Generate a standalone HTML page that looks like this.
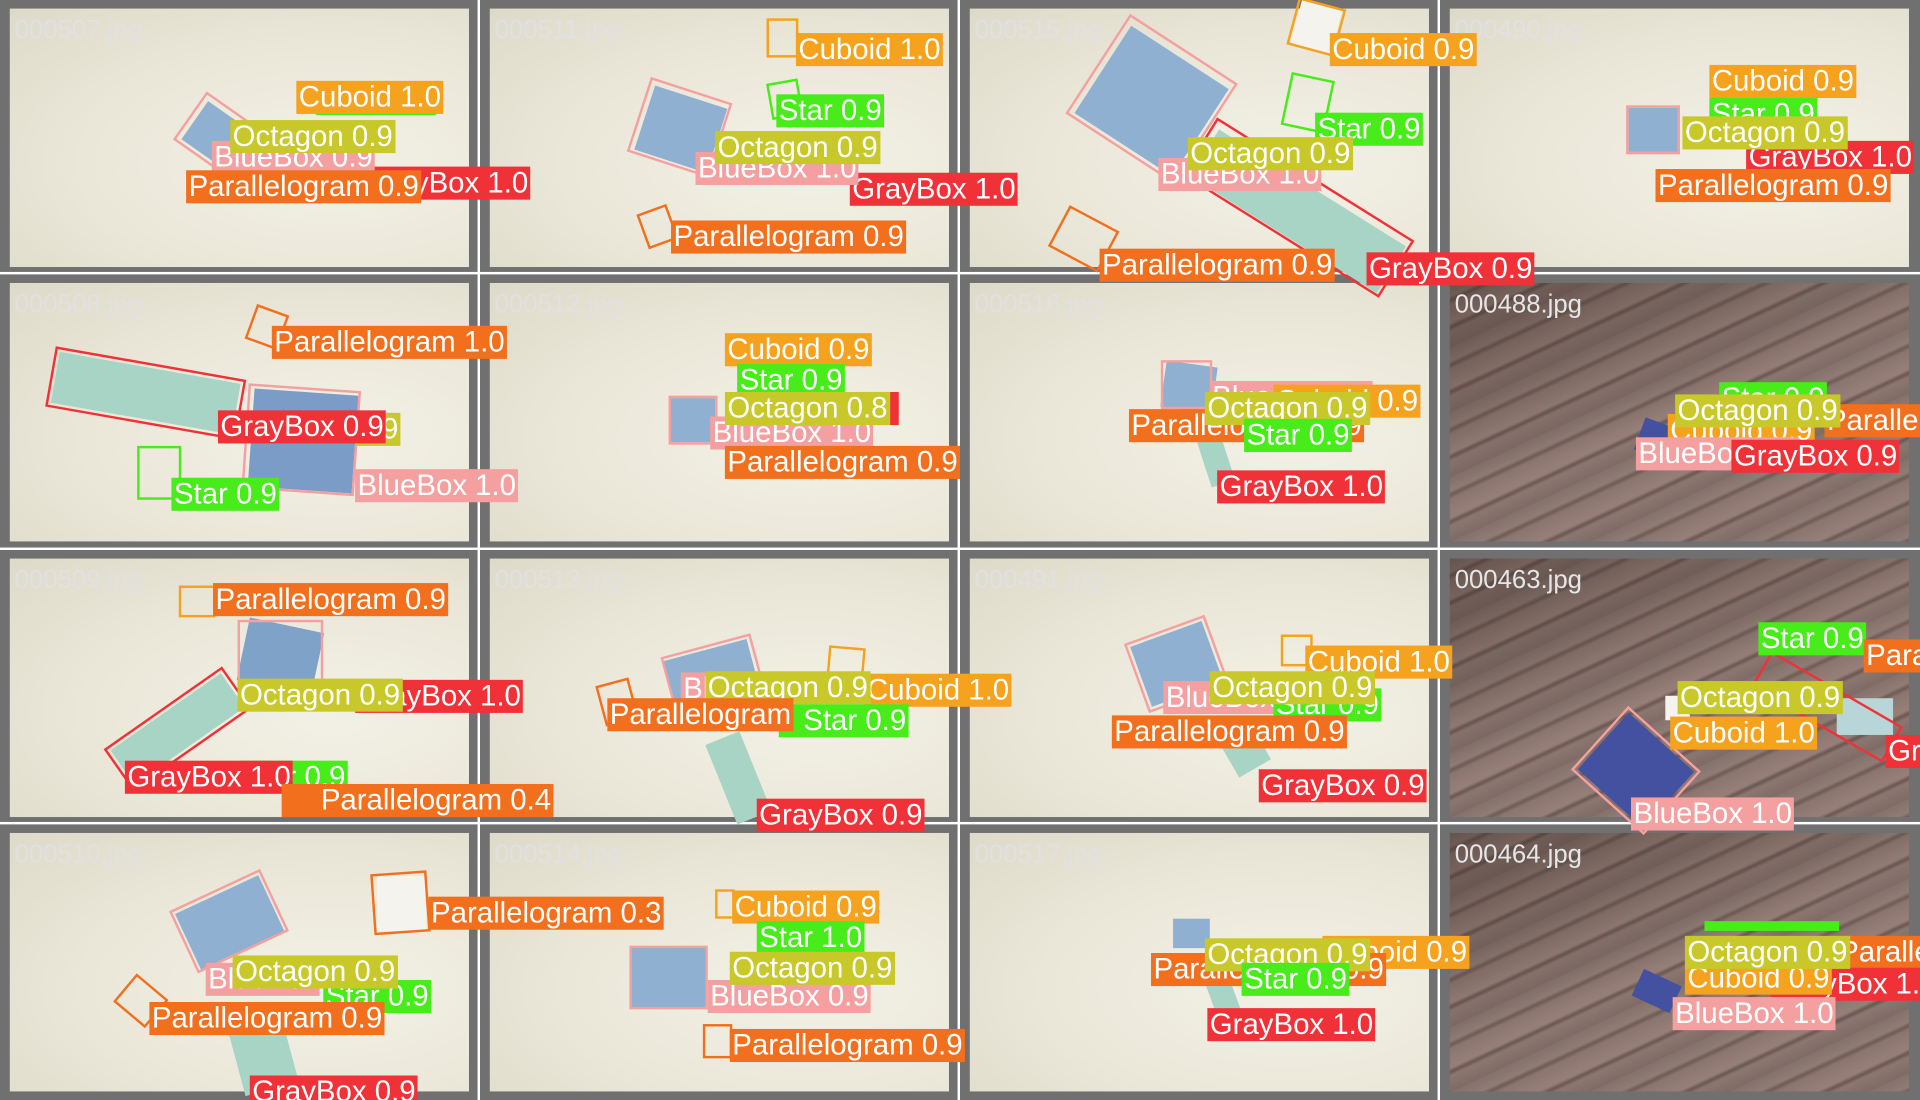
<!DOCTYPE html>
<html><head><meta charset="utf-8"><style>
html,body{margin:0;padding:0;width:1920px;height:1100px;overflow:hidden;background:#fff}
#c{position:absolute;left:0;top:0;width:1568px;height:898px;transform-origin:0 0;transform:scale(1.22449,1.22494);background:#707070;overflow:hidden;font-family:"Liberation Sans",sans-serif}
.vl{position:absolute;top:0;width:2px;height:898px;background:#fff}
.hl{position:absolute;left:0;height:2px;width:1568px;background:#fff}
.im{position:absolute;width:375px;height:211px;overflow:visible}
.m{background:radial-gradient(ellipse at 70% 60%,#f3f1e6 0%,#ebe8da 50%,#dedac9 100%)}
.w{background:linear-gradient(160deg,rgba(40,25,20,.35),rgba(0,0,0,0) 50%),repeating-linear-gradient(155deg,#85716b 0px,#8f7c75 10px,#6e5b55 13px,#8a766f 16px,#977f78 30px,#6a5752 33px,#8b7770 36px,#7f6b65 48px)}
.fn{position:absolute;left:4px;top:6px;font-size:21px;color:rgba(225,225,230,.8);line-height:24px}
.w .fn{color:#e6e6e6}
.l{position:absolute;height:27px;line-height:27px;font-size:24px;color:#fff;padding:0 2px;white-space:nowrap}
.cu{background:#f5a21f}.st{background:#47ec1a}.oc{background:#c8c82b}.bb{background:#f5a0a0}.pa{background:#f2701d}.gb{background:#f03238}
.o{position:absolute;border:2px solid;box-sizing:border-box}
.blue{position:absolute;background:#8fb0d0}
.dblue{position:absolute;background:#4450a0}
.gray{position:absolute;background:#a8d4c6}
.cube{position:absolute;background:#f4f3ee}
</style></head><body><div id="c">

<div class="im m" style="left:8px;top:6.5px"><div class="fn">000507.jpg</div></div>
<div class="im m" style="left:400px;top:6.5px"><div class="fn">000511.jpg</div></div>
<div class="im m" style="left:792px;top:6.5px"><div class="fn">000515.jpg</div></div>
<div class="im m" style="left:1184px;top:6.5px"><div class="fn">000490.jpg</div></div>
<div class="im m" style="left:8px;top:231px"><div class="fn">000508.jpg</div></div>
<div class="im m" style="left:400px;top:231px"><div class="fn">000512.jpg</div></div>
<div class="im m" style="left:792px;top:231px"><div class="fn">000516.jpg</div></div>
<div class="im w" style="left:1184px;top:231px"><div class="fn">000488.jpg</div></div>
<div class="im m" style="left:8px;top:455.5px"><div class="fn">000509.jpg</div></div>
<div class="im m" style="left:400px;top:455.5px"><div class="fn">000513.jpg</div></div>
<div class="im m" style="left:792px;top:455.5px"><div class="fn">000491.jpg</div></div>
<div class="im w" style="left:1184px;top:455.5px"><div class="fn">000463.jpg</div></div>
<div class="im m" style="left:8px;top:680px"><div class="fn">000510.jpg</div></div>
<div class="im m" style="left:400px;top:680px"><div class="fn">000514.jpg</div></div>
<div class="im m" style="left:792px;top:680px"><div class="fn">000517.jpg</div></div>
<div class="im w" style="left:1184px;top:680px"><div class="fn">000464.jpg</div></div>

<div class="vl" style="left:390px"></div><div class="vl" style="left:782px"></div><div class="vl" style="left:1174px"></div>
<div class="hl" style="top:222px"></div><div class="hl" style="top:446.5px"></div><div class="hl" style="top:671px"></div>

<div class="blue" style="left:155px;top:92px;width:45px;height:38px;transform:rotate(35deg)"></div>
<div class="o" style="left:150px;top:86px;width:55px;height:48px;transform:rotate(35deg);border-color:#f5a0a0"></div>
<div class="blue" style="left:525px;top:78px;width:62px;height:55px;transform:rotate(18deg)"></div>
<div class="o" style="left:520px;top:72px;width:70px;height:64px;transform:rotate(18deg);border-color:#f5a0a0"></div>
<div class="blue" style="left:893px;top:40px;width:95px;height:85px;transform:rotate(33deg)"></div>
<div class="o" style="left:888px;top:32px;width:105px;height:97px;transform:rotate(33deg);border-color:#f5a0a0"></div>
<div class="gray" style="left:970px;top:150px;width:180px;height:45px;transform:rotate(32deg)"></div>
<div class="o" style="left:965px;top:142px;width:190px;height:55px;transform:rotate(32deg);border-color:#f03238"></div>
<div class="cube" style="left:1058px;top:4px;width:34px;height:36px;transform:rotate(15deg)"></div>
<div class="o" style="left:1055px;top:2px;width:40px;height:40px;transform:rotate(15deg);border-color:#f5a21f"></div>
<div class="o" style="left:1050px;top:62px;width:36px;height:44px;transform:rotate(12deg);border-color:#47ec1a"></div>
<div class="o" style="left:862px;top:176px;width:46px;height:38px;transform:rotate(28deg);border-color:#f2701d"></div>
<div class="blue" style="left:1330px;top:88px;width:40px;height:36px"></div>
<div class="o" style="left:1328px;top:86px;width:44px;height:40px;border-color:#f5a0a0"></div>
<div class="o" style="left:626px;top:15px;width:26px;height:32px;border-color:#f5a21f"></div>
<div class="o" style="left:628px;top:66px;width:26px;height:30px;transform:rotate(-10deg);border-color:#47ec1a"></div>
<div class="o" style="left:524px;top:170px;width:26px;height:30px;transform:rotate(-20deg);border-color:#f2701d"></div>

<div class="gray" style="left:44px;top:300px;width:150px;height:42px;transform:rotate(10deg)"></div>
<div class="o" style="left:40px;top:296px;width:158px;height:50px;transform:rotate(10deg);border-color:#f03238"></div>
<div class="blue" style="left:205px;top:320px;width:85px;height:80px;transform:rotate(4deg);background:#7a9cc6"></div>
<div class="o" style="left:200px;top:316px;width:92px;height:86px;transform:rotate(4deg);border-color:#f5a0a0"></div>
<div class="o" style="left:112px;top:364px;width:36px;height:44px;border-color:#47ec1a"></div>
<div class="o" style="left:204px;top:252px;width:28px;height:30px;transform:rotate(20deg);border-color:#f2701d"></div>
<div class="blue" style="left:548px;top:325px;width:36px;height:36px"></div>
<div class="o" style="left:546px;top:323px;width:40px;height:40px;border-color:#f5a0a0"></div>
<div class="blue" style="left:950px;top:297px;width:42px;height:38px;transform:rotate(8deg)"></div>
<div class="o" style="left:948px;top:294px;width:42px;height:40px;border-color:#f5a0a0"></div>
<div class="gray" style="left:982px;top:350px;width:20px;height:46px;transform:rotate(-18deg)"></div>
<div class="dblue" style="left:1338px;top:346px;width:36px;height:28px;transform:rotate(20deg)"></div>

<div class="blue" style="left:198px;top:510px;width:62px;height:52px;transform:rotate(12deg);background:#7fa2c8"></div>
<div class="o" style="left:194px;top:506px;width:70px;height:60px;border-color:#f5a0a0"></div>
<div class="gray" style="left:90px;top:578px;width:110px;height:34px;transform:rotate(-35deg)"></div>
<div class="o" style="left:86px;top:574px;width:118px;height:42px;transform:rotate(-35deg);border-color:#f03238"></div>
<div class="o" style="left:146px;top:478px;width:30px;height:26px;border-color:#f5a21f"></div>
<div class="blue" style="left:546px;top:530px;width:70px;height:40px;transform:rotate(-15deg)"></div>
<div class="o" style="left:544px;top:526px;width:76px;height:46px;transform:rotate(-15deg);border-color:#f5a0a0"></div>
<div class="gray" style="left:588px;top:600px;width:30px;height:70px;transform:rotate(-22deg)"></div>
<div class="o" style="left:676px;top:528px;width:30px;height:26px;transform:rotate(5deg);border-color:#f5a21f"></div>
<div class="o" style="left:490px;top:556px;width:28px;height:34px;transform:rotate(-15deg);border-color:#f2701d"></div>
<div class="blue" style="left:930px;top:516px;width:62px;height:52px;transform:rotate(-20deg)"></div>
<div class="o" style="left:926px;top:512px;width:70px;height:60px;transform:rotate(-20deg);border-color:#f5a0a0"></div>
<div class="gray" style="left:1000px;top:590px;width:30px;height:40px;transform:rotate(-30deg)"></div>
<div class="o" style="left:1046px;top:518px;width:26px;height:26px;border-color:#f5a21f"></div>
<div class="cube" style="left:1360px;top:568px;width:20px;height:20px"></div>
<div class="dblue" style="left:1300px;top:598px;width:72px;height:62px;transform:rotate(42deg)"></div>
<div class="o" style="left:1296px;top:594px;width:80px;height:70px;transform:rotate(42deg);border-color:#f5a0a0"></div>
<div class="cube" style="left:1500px;top:570px;width:46px;height:30px;background:#b8d6d8"></div>
<div class="o" style="left:1430px;top:560px;width:124px;height:34px;transform:rotate(30deg);border-color:#f03238"></div>

<div class="blue" style="left:150px;top:728px;width:75px;height:50px;transform:rotate(-25deg)"></div>
<div class="o" style="left:146px;top:724px;width:82px;height:56px;transform:rotate(-25deg);border-color:#f5a0a0"></div>
<div class="gray" style="left:192px;top:830px;width:45px;height:60px;transform:rotate(-15deg)"></div>
<div class="cube" style="left:308px;top:715px;width:40px;height:45px"></div>
<div class="o" style="left:304px;top:712px;width:46px;height:50px;transform:rotate(-4deg);border-color:#f2701d"></div>
<div class="o" style="left:98px;top:802px;width:34px;height:30px;transform:rotate(40deg);border-color:#f2701d"></div>
<div class="blue" style="left:515px;top:773px;width:62px;height:50px"></div>
<div class="o" style="left:514px;top:772px;width:64px;height:52px;border-color:#f5a0a0"></div>
<div class="o" style="left:574px;top:836px;width:24px;height:28px;border-color:#f2701d"></div>
<div class="o" style="left:584px;top:726px;width:16px;height:24px;border-color:#f5a21f"></div>
<div class="blue" style="left:958px;top:750px;width:30px;height:24px"></div>
<div class="gray" style="left:990px;top:800px;width:20px;height:34px;transform:rotate(-20deg)"></div>
<div class="dblue" style="left:1336px;top:797px;width:34px;height:24px;transform:rotate(25deg)"></div>

<div class="l gb" style="left:296px;top:136px">GrayBox 1.0</div>
<div class="l st" style="left:258px;top:86px;height:8px;width:94px;overflow:hidden"></div>
<div class="l cu" style="left:242px;top:66px">Cuboid 1.0</div>
<div class="l bb" style="left:173px;top:115px">BlueBox 0.9</div>
<div class="l oc" style="left:188px;top:98px">Octagon 0.9</div>
<div class="l pa" style="left:152px;top:139px">Parallelogram 0.9</div>
<div class="l cu" style="left:650px;top:27px">Cuboid 1.0</div>
<div class="l st" style="left:634px;top:77px">Star 0.9</div>
<div class="l gb" style="left:694px;top:141px">GrayBox 1.0</div>
<div class="l bb" style="left:568px;top:124px">BlueBox 1.0</div>
<div class="l oc" style="left:584px;top:107px">Octagon 0.9</div>
<div class="l pa" style="left:548px;top:180px">Parallelogram 0.9</div>
<div class="l cu" style="left:1086px;top:27px">Cuboid 0.9</div>
<div class="l st" style="left:1074px;top:92px">Star 0.9</div>
<div class="l bb" style="left:946px;top:129px">BlueBox 1.0</div>
<div class="l oc" style="left:970px;top:112px">Octagon 0.9</div>
<div class="l pa" style="left:898px;top:203px">Parallelogram 0.9</div>
<div class="l gb" style="left:1116px;top:206px">GrayBox 0.9</div>
<div class="l st" style="left:1396px;top:80px">Star 0.9</div>
<div class="l cu" style="left:1396px;top:53px">Cuboid 0.9</div>
<div class="l gb" style="left:1426px;top:115px">GrayBox 1.0</div>
<div class="l oc" style="left:1374px;top:95px">Octagon 0.9</div>
<div class="l pa" style="left:1352px;top:138px">Parallelogram 0.9</div>
<div class="l pa" style="left:222px;top:266px">Parallelogram 1.0</div>
<div class="l oc" style="left:290px;top:337px">0.9</div>
<div class="l gb" style="left:178px;top:335px">GrayBox 0.9</div>
<div class="l bb" style="left:290px;top:383px">BlueBox 1.0</div>
<div class="l st" style="left:140px;top:390px">Star 0.9</div>
<div class="l cu" style="left:592px;top:272px">Cuboid 0.9</div>
<div class="l st" style="left:602px;top:297px">Star 0.9</div>
<div class="l gb" style="left:700px;top:320px;width:30px"></div>
<div class="l bb" style="left:580px;top:340px">BlueBox 1.0</div>
<div class="l oc" style="left:592px;top:320px">Octagon 0.8</div>
<div class="l pa" style="left:592px;top:364px">Parallelogram 0.9</div>
<div class="l bb" style="left:988px;top:311px">BlueBox 1.0</div>
<div class="l cu" style="left:1040px;top:314px">Cuboid 0.9</div>
<div class="l pa" style="left:922px;top:334px">Parallelogram 0.9</div>
<div class="l oc" style="left:984px;top:320px">Octagon 0.9</div>
<div class="l st" style="left:1016px;top:342px">Star 0.9</div>
<div class="l gb" style="left:994px;top:384px">GrayBox 1.0</div>
<div class="l st" style="left:1404px;top:312px">Star 0.9</div>
<div class="l pa" style="left:1490px;top:330px">Parallelogram</div>
<div class="l cu" style="left:1362px;top:338px">Cuboid 0.9</div>
<div class="l oc" style="left:1368px;top:322px">Octagon 0.9</div>
<div class="l bb" style="left:1336px;top:357px">BlueBox 1.0</div>
<div class="l gb" style="left:1414px;top:359px">GrayBox 0.9</div>
<div class="l pa" style="left:174px;top:476px">Parallelogram 0.9</div>
<div class="l gb" style="left:290px;top:555px">GrayBox 1.0</div>
<div class="l oc" style="left:194px;top:554px">Octagon 0.9</div>
<div class="l st" style="left:196px;top:621px">Star 0.9</div>
<div class="l gb" style="left:102px;top:621px">GrayBox 1.0</div>
<div class="l pa" style="left:230px;top:640px;padding-left:32px">Parallelogram 0.4</div>
<div class="l cu" style="left:706px;top:550px">Cuboid 1.0</div>
<div class="l bb" style="left:556px;top:549px">BlueBox</div>
<div class="l oc" style="left:576px;top:548px">Octagon 0.9</div>
<div class="l st" style="left:636px;top:575px;padding-left:20px">Star 0.9</div>
<div class="l pa" style="left:496px;top:570px">Parallelogram</div>
<div class="l gb" style="left:618px;top:652px">GrayBox 0.9</div>
<div class="l cu" style="left:1066px;top:527px">Cuboid 1.0</div>
<div class="l bb" style="left:950px;top:556px">BlueBox</div>
<div class="l st" style="left:1040px;top:562px">Star 0.9</div>
<div class="l oc" style="left:988px;top:548px">Octagon 0.9</div>
<div class="l pa" style="left:908px;top:584px">Parallelogram 0.9</div>
<div class="l gb" style="left:1028px;top:628px">GrayBox 0.9</div>
<div class="l st" style="left:1436px;top:508px">Star 0.9</div>
<div class="l pa" style="left:1522px;top:522px">Parallelogram</div>
<div class="l oc" style="left:1370px;top:556px">Octagon 0.9</div>
<div class="l cu" style="left:1364px;top:585px">Cuboid 1.0</div>
<div class="l gb" style="left:1540px;top:600px">GrayBox</div>
<div class="l bb" style="left:1332px;top:651px">BlueBox 1.0</div>
<div class="l pa" style="left:350px;top:732px">Parallelogram 0.3</div>
<div class="l bb" style="left:168px;top:786px">BlueBox</div>
<div class="l st" style="left:264px;top:800px">Star 0.9</div>
<div class="l oc" style="left:190px;top:780px">Octagon 0.9</div>
<div class="l pa" style="left:122px;top:818px">Parallelogram 0.9</div>
<div class="l gb" style="left:204px;top:878px">GrayBox 0.9</div>
<div class="l cu" style="left:598px;top:727px">Cuboid 0.9</div>
<div class="l st" style="left:618px;top:752px">Star 1.0</div>
<div class="l bb" style="left:578px;top:800px">BlueBox 0.9</div>
<div class="l oc" style="left:596px;top:777px">Octagon 0.9</div>
<div class="l pa" style="left:596px;top:840px">Parallelogram 0.9</div>
<div class="l cu" style="left:1080px;top:764px">Cuboid 0.9</div>
<div class="l pa" style="left:940px;top:778px">Parallelogram 0.9</div>
<div class="l oc" style="left:984px;top:766px">Octagon 0.9</div>
<div class="l st" style="left:1014px;top:786px">Star 0.9</div>
<div class="l gb" style="left:986px;top:823px">GrayBox 1.0</div>
<div class="l st" style="left:1392px;top:752px;height:8px;width:106px"></div>
<div class="l pa" style="left:1500px;top:764px">Parallelogram</div>
<div class="l gb" style="left:1446px;top:790px">GrayBox 1.0</div>
<div class="l cu" style="left:1376px;top:785px">Cuboid 0.9</div>
<div class="l oc" style="left:1376px;top:764px">Octagon 0.9</div>
<div class="l bb" style="left:1366px;top:814px">BlueBox 1.0</div>

</div></body></html>
